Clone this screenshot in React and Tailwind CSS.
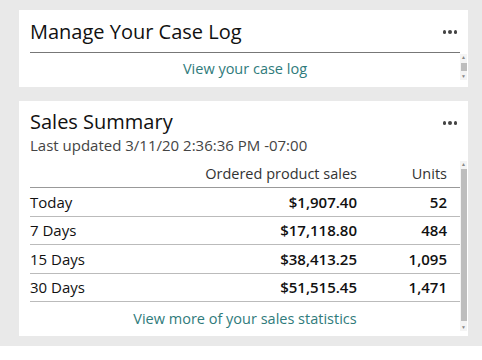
import React from 'react';

const rows = [
  { label: 'Today', sales: '$1,907.40', units: '52' },
  { label: '7 Days', sales: '$17,118.80', units: '484' },
  { label: '15 Days', sales: '$38,413.25', units: '1,095' },
  { label: '30 Days', sales: '$51,515.45', units: '1,471' },
];

function Dots() {
  return (
    <div className="flex gap-[2px] pt-[2px]">
      <span className="w-[3.5px] h-[3.5px] rounded-full bg-[#444]" />
      <span className="w-[3.5px] h-[3.5px] rounded-full bg-[#444]" />
      <span className="w-[3.5px] h-[3.5px] rounded-full bg-[#444]" />
    </div>
  );
}

function Scrollbar({ className, thumb }) {
  return (
    <div className={`w-[7px] flex flex-col items-center bg-[#f4f4f4] ${className}`}>
      <span className="text-[5px] leading-[7px] text-[#888]">▲</span>
      <div className={`w-[6px] bg-[#bdbdbd] ${thumb}`} />
      <div className="flex-1" />
      <span className="text-[5px] leading-[7px] text-[#888]">▼</span>
    </div>
  );
}

export default function App() {
  return (
    <div className="w-[482px] h-[360px] bg-white font-['Open_Sans',sans-serif]">
      <div className="h-[346px] bg-[#e9e9e9] pt-[10px] pl-[19px]">
        {/* Case log card */}
        <div className="w-[449px] h-[77px] bg-white flex flex-col">
          <div className="flex items-start justify-between pl-[11px] pr-[11px] pt-[8px]">
            <h2 className="text-[20px] leading-[28px] text-[#111]">Manage Your Case Log</h2>
            <div className="pt-[10px]"><Dots /></div>
          </div>
          <div className="flex flex-1 pl-[11px] pt-[6px]">
            <div className="flex-1 border-t border-[#777] flex justify-center pt-[6px]">
              <a className="text-[14.5px] leading-[20px] text-[#2f7b7b]">View your case log</a>
            </div>
            <Scrollbar className="h-[26px] mt-[2px] mr-[1px]" thumb="h-[8px] mt-[2px]" />
          </div>
        </div>

        {/* Sales summary card */}
        <div className="w-[449px] h-[235px] mt-[14px] bg-white flex flex-col">
          <div className="flex items-start justify-between pl-[11px] pr-[11px] pt-[8px]">
            <div>
              <h2 className="text-[20px] leading-[26px] text-[#111]">Sales Summary</h2>
              <p className="text-[15px] leading-[20px] text-[#444]">Last updated 3/11/20 2:36:36 PM -07:00</p>
            </div>
            <div className="pt-[10px]"><Dots /></div>
          </div>
          <div className="flex flex-1 pl-[11px] pt-[6px]">
            <div className="flex-1 flex flex-col">
              <div className="flex h-[27px] items-center border-b border-[#999] text-[14.5px] text-[#333]">
                <div className="flex-1" />
                <div className="w-[200px] text-right">Ordered product sales</div>
                <div className="w-[103px] text-right pr-[13px]">Units</div>
              </div>
              {rows.map((r) => (
                <div key={r.label} className="flex h-[28.5px] items-center border-b border-[#bbb] text-[15px] text-[#111]">
                  <div className="flex-1">{r.label}</div>
                  <div className="w-[200px] text-right font-semibold">{r.sales}</div>
                  <div className="w-[103px] text-right pr-[13px] font-semibold">{r.units}</div>
                </div>
              ))}
              <div className="flex justify-center pt-[7px]">
                <a className="text-[14.5px] leading-[20px] text-[#2f7b7b]">View more of your sales statistics</a>
              </div>
            </div>
            <Scrollbar className="h-[170px] mr-[1px]" thumb="h-[152px] mt-[1px]" />
          </div>
        </div>
      </div>
    </div>
  );
}
